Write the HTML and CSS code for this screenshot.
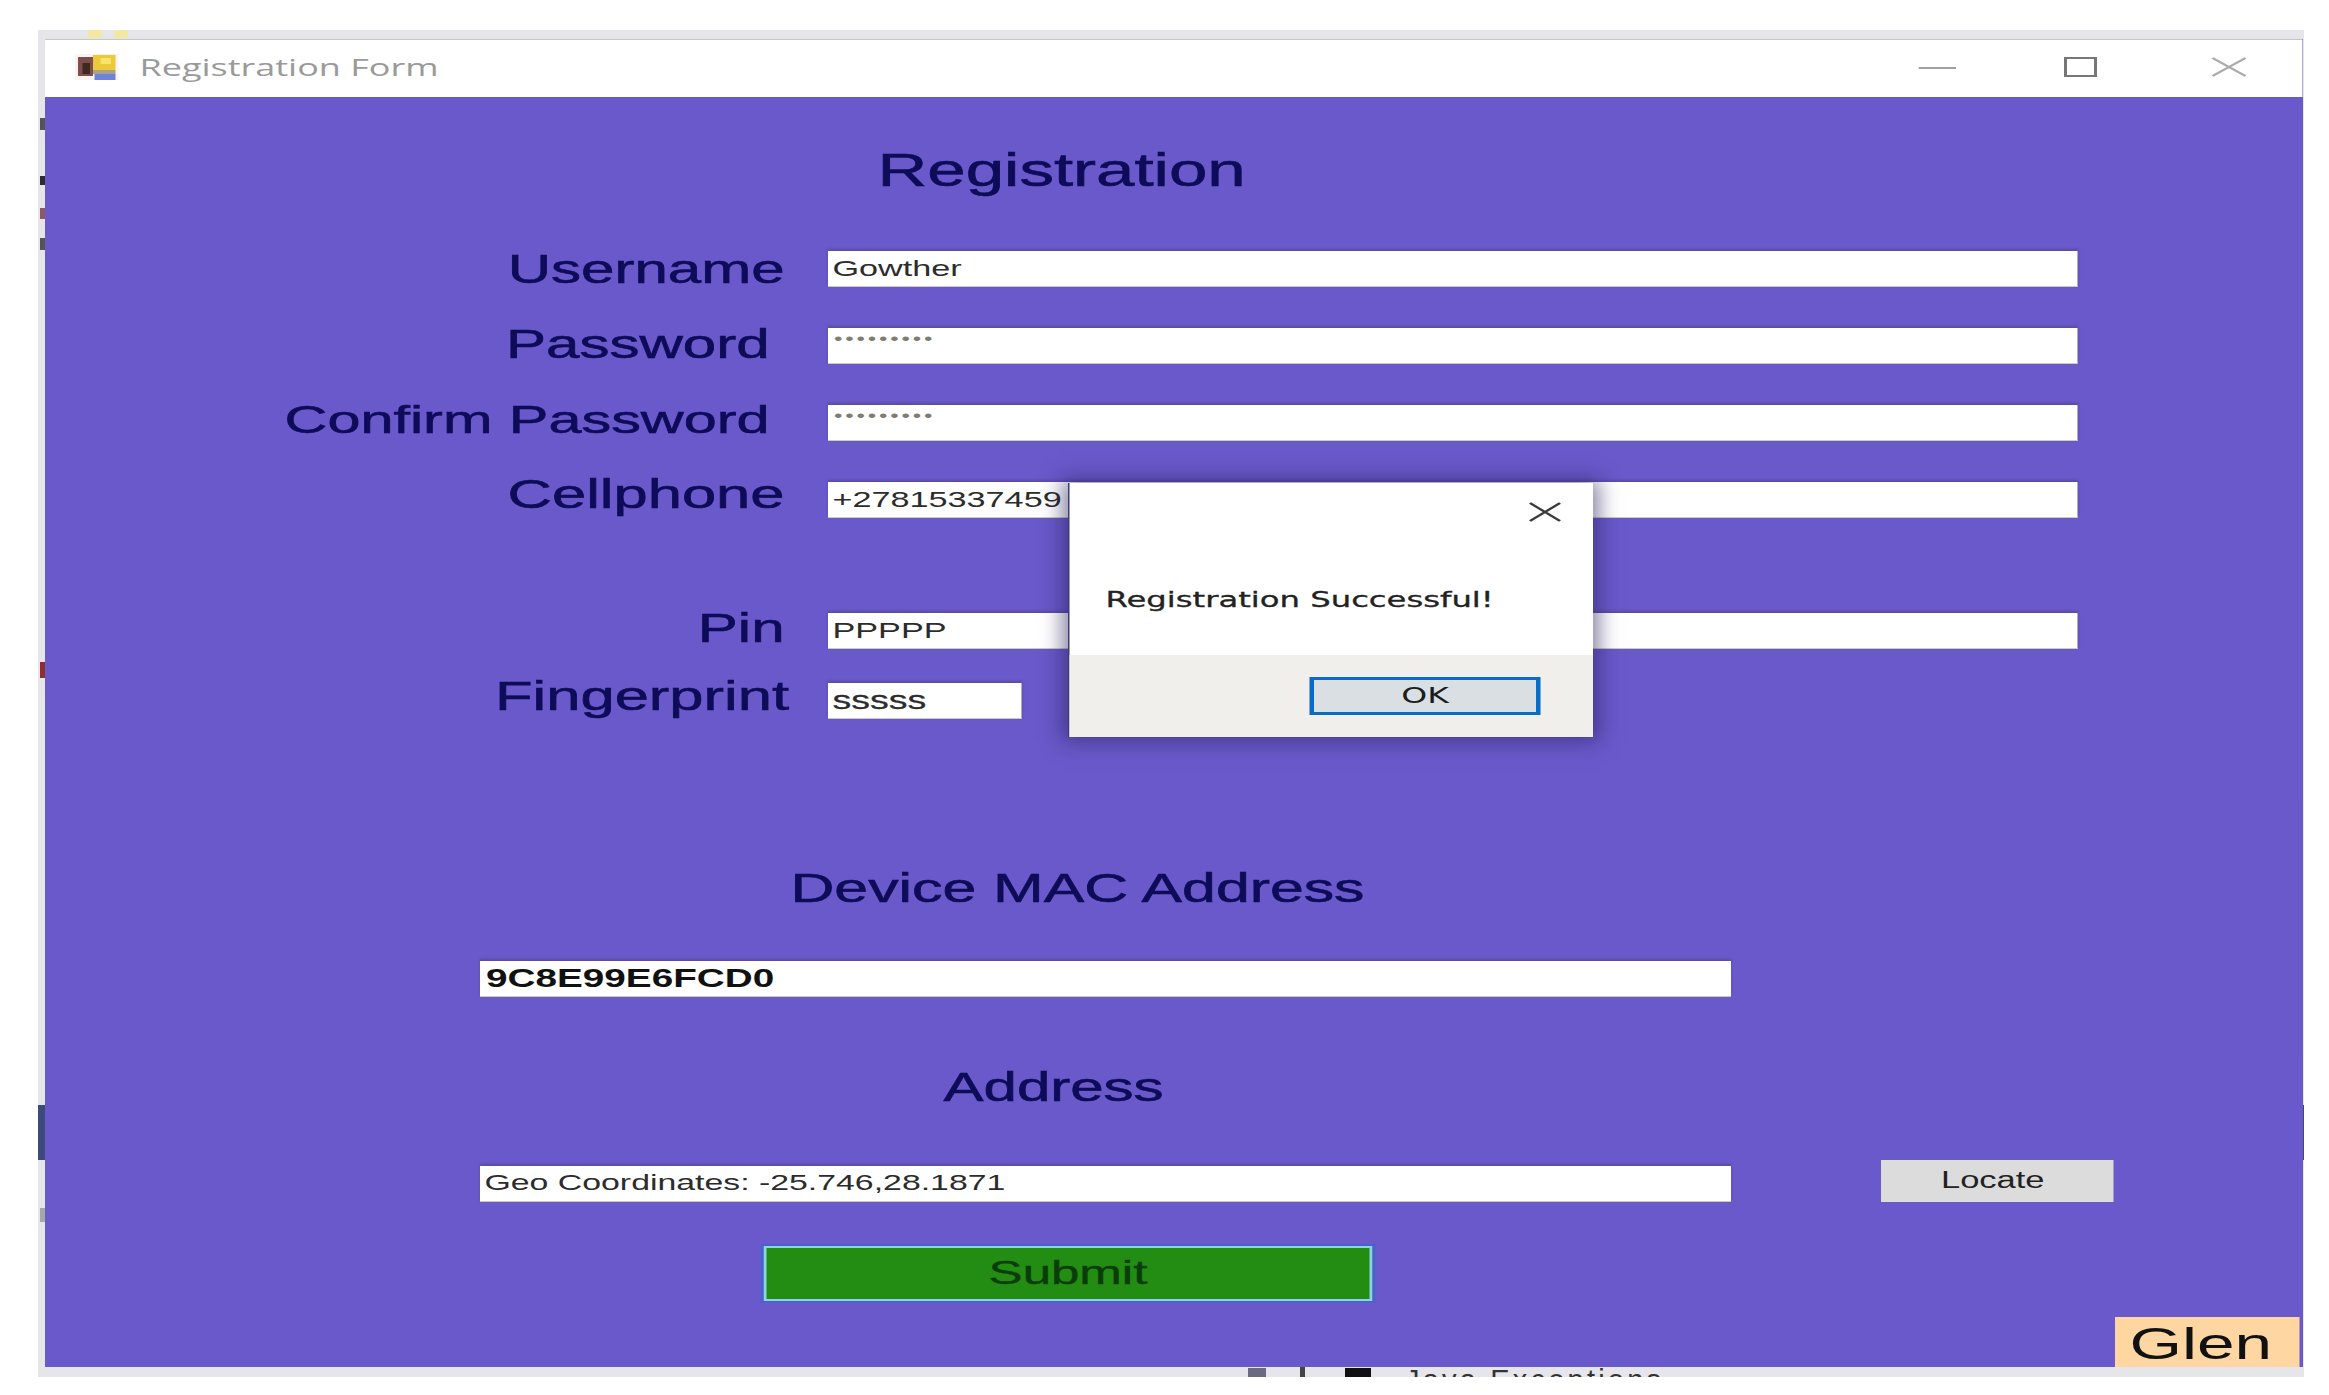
FILE: index.html
```html
<!DOCTYPE html>
<html lang="en">
<head>
<meta charset="utf-8">
<title>Registration Form</title>
<link rel="stylesheet" href="styles.css">
</head>
<body>
<div class="backdrop">
  <span class="mark mark-a"></span>
  <span class="mark mark-b"></span>
  <span class="mark mark-c"></span>
  <span class="mark mark-d"></span>
  <span class="mark mark-e"></span>
  <span class="mark mark-f"></span>
  <span class="edge edge-left"></span>
  <span class="edge edge-right"></span>
  <span class="tint tint-a"></span>
  <span class="tint tint-b"></span>

  <div class="window">
    <header class="titlebar">
      <svg class="app-icon" viewBox="0 0 29 26" aria-hidden="true">
        <rect width="29" height="26" fill="#fbf3ee"/>
        <rect x="2" y="3" width="10" height="19" fill="#7c4f4c"/>
        <rect x="5" y="9" width="5" height="11" fill="#3c2a1e"/>
        <rect x="12" y="1" width="15" height="15" fill="#ecc93a"/>
        <rect x="17" y="4" width="7" height="6" fill="#f7e56a"/>
        <rect x="12" y="16" width="15" height="4" fill="#a9a38a"/>
        <rect x="13" y="20" width="14" height="6" fill="#6f82dc"/>
      </svg>
      <span class="title">Registration Form</span>
      <div class="controls">
        <svg class="ctl ctl-min" viewBox="0 0 25 20" aria-hidden="true"><path d="M0 11H25"/></svg>
        <svg class="ctl ctl-max" viewBox="0 0 22 20" aria-hidden="true"><rect x="1" y="1" width="20" height="18"/></svg>
        <svg class="ctl ctl-close" viewBox="0 0 24 20" aria-hidden="true"><path d="M1 1L23 19M23 1L1 19"/></svg>
      </div>
    </header>

    <main class="content">
      <h1 class="heading heading-main">Registration</h1>

      <div class="rows rows-account">
        <div class="row"><label class="label label-user">Username</label><div class="field">Gowther</div></div>
        <div class="row"><label class="label label-short label-pass">Password</label><div class="field field-mask">•••••••••</div></div>
        <div class="row"><label class="label label-short label-confirm">Confirm Password</label><div class="field field-mask">•••••••••</div></div>
        <div class="row"><label class="label label-cell">Cellphone</label><div class="field">+27815337459</div></div>
      </div>

      <div class="rows rows-bio">
        <div class="row"><label class="label">Pin</label><div class="field">PPPPP</div></div>
        <div class="row"><label class="label label-long">Fingerprint</label><div class="field field-small">sssss</div></div>
      </div>

      <h2 class="heading heading-mac">Device MAC Address</h2>
      <div class="field field-wide field-bold">9C8E99E6FCD0</div>

      <h2 class="heading heading-address">Address</h2>
      <div class="geo-row">
        <div class="field field-wide field-geo">Geo Coordinates: -25.746,28.1871</div>
        <button class="btn-locate" type="button">Locate</button>
      </div>

      <button class="btn-submit" type="button">Submit</button>

      <div class="badge">Glen</div>

      <section class="dialog" role="dialog">
        <div class="dialog-body">
          <svg class="dialog-close" viewBox="0 0 22 20" aria-hidden="true"><path d="M1 1L21 19M21 1L1 19"/></svg>
          <p class="dialog-text">Registration Successful!</p>
        </div>
        <div class="dialog-foot">
          <button class="btn-ok" type="button">OK</button>
        </div>
      </section>
    </main>
  </div>

  <div class="behind">
    <span class="behind-icon behind-grey"></span>
    <span class="behind-arrow"></span>
    <span class="behind-icon behind-black"></span>
    <span class="behind-text">Java Exceptions</span>
  </div>
</div>
</body>
</html>
```
FILE: styles.css
```css
* { box-sizing: border-box; }

html, body { margin: 0; padding: 0; background: #fff; }

body { height: 1395px; overflow: hidden; font-family: "Liberation Sans", Arial, sans-serif; }

.backdrop {
  position: relative;
  width: 2266px;
  height: 1347px;
  margin: 30px 0 0 38px;
  padding: 9px 2px 0 7px;
  background: #e6e6ea;
  overflow: hidden;
}

.mark { position: absolute; left: 2px; width: 5px; background: #55525a; }
.mark-a { top: 88px; height: 12px; }
.mark-b { top: 146px; height: 9px; background: #2e2b33; }
.mark-c { top: 178px; height: 11px; background: #8a5a66; }
.mark-d { top: 208px; height: 12px; }
.mark-e { top: 632px; height: 16px; background: #8a2f35; }
.mark-f { top: 1178px; height: 14px; background: #a4a8ae; }

.edge { position: absolute; }
.edge-left { left: 0; top: 1075px; width: 7px; height: 55px; background: #3f4a7c; }
.edge-right { right: 0; top: 1075px; width: 2px; height: 55px; background: #3f4a7c; }

.tint { position: absolute; top: 0; height: 8px; }
.tint-a { left: 50px; width: 14px; background: #f0e8a4; }
.tint-b { left: 76px; width: 14px; background: #f0e8a4; }

/* The reference is a screenshot stretched sideways, so the whole window is
   laid out at its natural width and widened as one piece. */
.window {
  width: 1504.67px;
  height: 1328px;
  transform: scaleX(1.5);
  transform-origin: 0 0;
  border-top: 1px solid #c6c6c6;
  display: flex;
  flex-direction: column;
}

.titlebar {
  flex: 0 0 57px;
  display: flex;
  align-items: center;
  padding-left: 20px;
  padding-bottom: 3px;
  background: #fff;
}

.app-icon { width: 29px; height: 26px; margin-right: 14px; }

.title {
  font-family: "Open Sans", sans-serif;
  font-size: 24px;
  color: #9a9a9a;
  line-height: 1;
}

.controls {
  display: flex;
  align-items: center;
  margin-left: auto;
  padding-right: 37px;
}

.ctl { display: block; height: 20px; fill: none; stroke: #8c8c8c; stroke-width: 2; }
.ctl-min { width: 25px; margin-right: 72px; stroke: #a0a0a0; }
.ctl-max { width: 22px; margin-right: 76px; stroke: #777; }
.ctl-close { width: 24px; stroke: #ababab; }

.content {
  position: relative;
  flex: 1;
  display: flex;
  flex-direction: column;
  align-items: flex-start;
  padding-top: 43px;
  background: #6959ca;
}

.heading {
  margin: 0;
  font-weight: 400;
  line-height: 60px;
  color: #0e0c58;
  white-space: nowrap;
  -webkit-text-stroke: 0.6px #0e0c58;
}

.heading-main { margin-left: 555px; font-size: 46px; }
.heading-mac { margin: 139px 0 43px 497px; font-size: 40.5px; }
.heading-address { margin: 60px 0 49px 599px; font-size: 40px; }

.rows { display: flex; flex-direction: column; width: 100%; }
.rows-account { margin-top: 51px; gap: 41px; }
.rows-bio { margin-top: 95px; gap: 34px; }

.row {
  display: grid;
  grid-template-columns: 522px 833px;
  align-items: start;
  height: 36px;
}

.label {
  padding-right: 29px;
  margin-top: -3px;
  font-size: 40px;
  line-height: 36px;
  color: #0e0c58;
  -webkit-text-stroke: 0.6px #0e0c58;
  text-align: right;
  white-space: nowrap;
}

.label-user { margin-top: 0; }
.label-pass { margin-top: -2px; }
.label-confirm { margin-top: -4px; font-size: 39.6px; }
.label-cell { margin-top: -6px; font-size: 41px; }
.label-short { padding-right: 39px; }
.label-long { margin-top: -5px; padding-right: 26px; font-size: 41px; }

.field {
  height: 36px;
  padding-left: 3px;
  background: #fff;
  border-bottom: 1px solid #cfcbb8;
  box-shadow: 0 -2px 2px rgba(70, 60, 120, 0.45);
  font-size: 22.8px;
  line-height: 34px;
  color: #2c2c2c;
  white-space: nowrap;
  overflow: hidden;
}

.field-mask {
  padding-left: 4px;
  font-size: 16px;
  line-height: 22px;
  letter-spacing: 1.9px;
  color: #7d7d70;
}

.field-small { width: 129px; font-size: 25px; -webkit-text-stroke: 0.3px #2c2c2c; }
.field-wide { width: 834px; margin-left: 290px; flex: none; }
.field-bold { font-weight: 700; font-size: 25.8px; color: #111; padding-left: 4px; }
.field-geo { font-size: 22.55px; }

.geo-row {
  display: flex;
  align-items: flex-end;
  height: 36px;
}

.btn-locate {
  flex: none;
  width: 155px;
  height: 42px;
  margin-left: 100px;
  padding: 0 6px 1px 0;
  border: 0;
  background: #dcdcdc;
  font: 400 23px/1 "Liberation Sans", Arial, sans-serif;
  color: #222;
}

.btn-submit {
  width: 406px;
  height: 55px;
  margin: 44px 0 0 479px;
  padding: 0 0 3px;
  background: #238c12;
  border: 2px solid #8ed4e6;
  outline: 2px solid #4a62d0;
  font: 400 34px/1 "Liberation Sans", Arial, sans-serif;
  -webkit-text-stroke: 0.4px #0a3d0a;
  color: #0a3d0a;
}

.badge {
  position: absolute;
  right: 2px;
  bottom: 0;
  width: 123px;
  height: 50px;
  padding-left: 10px;
  background: #fdd6a2;
  font-size: 45px;
  line-height: 54px;
  color: #111;
}

.dialog {
  position: absolute;
  left: 682px;
  top: 386px;
  width: 350px;
  height: 254px;
  display: flex;
  flex-direction: column;
  background: #fff;
  border-left: 1px solid #3f3a70;
  box-shadow: 0 0 16px 4px rgba(40, 30, 90, 0.55);
}

.dialog-body {
  position: relative;
  flex: 1;
  padding: 99px 0 0 24px;
}

.dialog-close {
  position: absolute;
  top: 19px;
  right: 21px;
  width: 22px;
  height: 20px;
  fill: none;
  stroke: #3a3a3a;
  stroke-width: 2;
}

.dialog-text {
  margin: 0;
  font-family: "DejaVu Sans", sans-serif;
  font-size: 21.5px;
  line-height: 36px;
  color: #222;
  -webkit-text-stroke: 0.3px #222;
  white-space: nowrap;
}

.dialog-foot {
  flex: 0 0 82px;
  display: flex;
  justify-content: flex-end;
  padding: 22px 35px 0 0;
  background: #f0efec;
}

.btn-ok {
  width: 154px;
  height: 38px;
  padding: 0;
  background: #d9dfe2;
  border: 3px solid #0a6cc4;
  font: 400 22px/1 "DejaVu Sans", sans-serif;
  color: #1c1c1c;
}

.behind {
  display: flex;
  align-items: flex-start;
  height: 10px;
  padding: 0 0 0 1203px;
  overflow: hidden;
}

.behind-icon { width: 18px; height: 10px; margin-top: 1px; }
.behind-grey { background: #6a6a80; }
.behind-black { background: #111; margin-right: 34px; margin-left: 40px; width: 26px; }
.behind-arrow { width: 5px; height: 10px; margin: 0 0 0 34px; background: #444; }

.behind-text {
  font-size: 29px;
  line-height: 26px;
  letter-spacing: 3.2px;
  color: #333;
  white-space: nowrap;
}
```
